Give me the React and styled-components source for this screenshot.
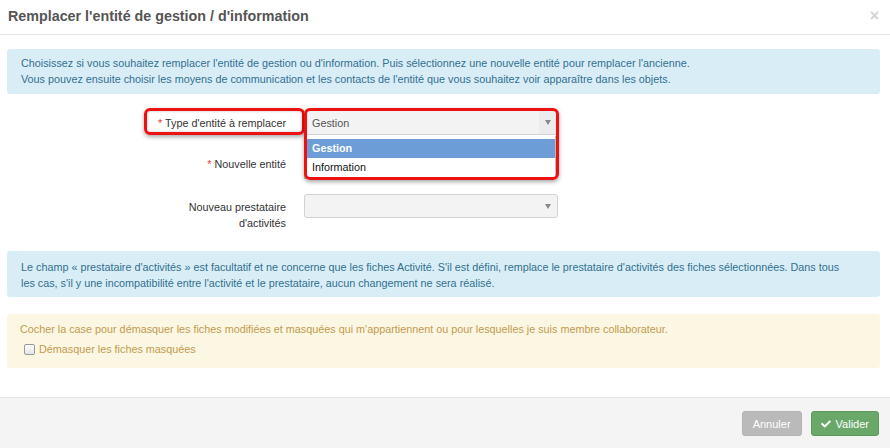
import React from 'react';
import styled, {createGlobalStyle} from 'styled-components';
import {FaCheck} from 'react-icons/fa';

const GlobalStyle = createGlobalStyle`
  html, body {
    margin: 0;
    padding: 0;
    background: #fff;
    font-family: "Liberation Sans", Arial, sans-serif;
    font-size: 10.8px;
    color: #333;
  }
`;

const Modal = styled.div`
  display: flex;
  flex-direction: column;
  height: 100vh;
  width: 100%;
`;

const Header = styled.div`
  display: flex;
  align-items: center;
  justify-content: space-between;
  height: 34px;
  padding: 0 11px 0 8px;
  border-bottom: 1px solid #e5e5e5;
`;

const Title = styled.h4`
  margin: 0;
  font-size: 14.3px;
  font-weight: bold;
  color: #555;
  line-height: 18px;
  padding-bottom: 3px;
`;

const Close = styled.span`
  font-size: 16px;
  font-weight: bold;
  color: #d4d4d4;
  line-height: 1;
  padding-bottom: 3px;
`;

const Body = styled.div`
  flex: 1;
  padding: 14px 10px 0 7px;
`;

const Alert = styled.div`
  border-radius: 3px;
  padding: ${props => props.pad || '7px 14px'};
  line-height: 16px;
  color: ${props => (props.warning ? '#c39a4f' : '#31708f')};
  background: ${props => (props.warning ? '#fcf7e3' : '#d9edf7')};
  margin-bottom: ${props => props.mb || 0}px;
`;

const Form = styled.div`
  display: grid;
  grid-template-columns: 279px 254px;
  column-gap: 18px;
  row-gap: 17px;
  margin: 16px 0 20px;
`;

const Label = styled.div`
  text-align: right;
  padding-top: ${props => props.pt || 5}px;
  line-height: 16px;
  color: #333;
`;

const Star = styled.span`
  color: #e33;
  margin-right: 3px;
`;

const Highlight = styled.span`
  position: relative;
  display: inline-block;
  &::after {
    content: '';
    position: absolute;
    top: -7px;
    bottom: -4px;
    left: -14px;
    right: -19px;
    border: 3px solid #ee1111;
    border-radius: 6px;
    box-shadow: 0 2px 4px rgba(0, 0, 0, 0.35), inset 0 0 3px rgba(0, 0, 0, 0.25);
    pointer-events: none;
  }
`;

const SelectWrap = styled.div`
  position: relative;
`;

const Select = styled.div`
  display: flex;
  align-items: center;
  height: ${props => props.h || 25}px;
  box-sizing: border-box;
  border: 1px solid #d2d2d2;
  border-radius: ${props => (props.open ? '3px 3px 0 0' : '3px')};
  background: #f3f3f3;
  color: #555;
  padding-left: 7px;
`;

const SelectValue = styled.span`
  flex: 1;
`;

const Arrow = styled.span`
  display: flex;
  align-items: center;
  justify-content: center;
  align-self: stretch;
  width: 18px;
  background: ${props => (props.shade ? '#ececec' : 'transparent')};
  &::before {
    content: '';
    border-left: 3.5px solid transparent;
    border-right: 3.5px solid transparent;
    border-top: 5px solid #888;
  }
`;

const Dropdown = styled.div`
  position: absolute;
  top: 26px;
  left: 0;
  right: 2px;
  z-index: 2;
  background: #fff;
  border: 1px solid #bbb;
  border-top: none;
  padding: 3px 0 1px;
`;

const Option = styled.div`
  height: 19px;
  line-height: 19px;
  padding-left: 7px;
  color: ${props => (props.active ? '#fff' : '#111')};
  font-weight: ${props => (props.active ? 'bold' : 'normal')};
  background: ${props => (props.active ? '#6d9dd7' : 'transparent')};
`;

const SelectFrame = styled.div`
  position: absolute;
  top: -2px;
  left: 0;
  width: 255px;
  height: 72px;
  box-sizing: border-box;
  border: 3px solid #ee1111;
  border-radius: 6px;
  box-shadow: 0 2px 4px rgba(0, 0, 0, 0.35);
  z-index: 3;
  pointer-events: none;
`;

const CheckRow = styled.label`
  display: flex;
  align-items: center;
  margin: 4px 0 0 4px;
  line-height: 16px;
`;

const CheckBox = styled.span`
  width: 9px;
  height: 9px;
  border: 1px solid #999;
  border-radius: 2px;
  background: linear-gradient(#fdfdfd, #e4e4e4);
  margin-right: 4px;
`;

const Footer = styled.div`
  display: flex;
  justify-content: flex-end;
  gap: 9px;
  height: 51px;
  padding: 13px 11px 0 0;
  box-sizing: border-box;
  border-top: 1px solid #e5e5e5;
  background: #f4f4f4;
`;

const Button = styled.button`
  display: flex;
  align-items: center;
  gap: 5px;
  height: 25px;
  padding: 0 ${props => (props.primary ? 9 : 10)}px;
  border-radius: 3px;
  border: 1px solid ${props => (props.primary ? '#5c9a5c' : '#b3b3b3')};
  background: ${props => (props.primary ? '#6aa86a' : '#bababa')};
  color: #fff;
  font-family: "Liberation Sans", Arial, sans-serif;
  font-size: 11px;
  cursor: pointer;
`;

// Modal de remplacement de l'entité
export default function App() {
    return (
        <Modal>
            <GlobalStyle/>
            <Header>
                <Title>Remplacer l'entité de gestion / d'information</Title>
                <Close>×</Close>
            </Header>
            <Body>
                <Alert pad="6px 14px 7px">
                    Choisissez si vous souhaitez remplacer l'entité de gestion ou d'information. Puis sélectionnez une nouvelle entité pour remplacer l'ancienne.
                    <br/>
                    Vous pouvez ensuite choisir les moyens de communication et les contacts de l'entité que vous souhaitez voir apparaître dans les objets.
                </Alert>
                <Form>
                    <Label>
                        <Highlight><Star>*</Star>Type d'entité à remplacer</Highlight>
                    </Label>
                    <SelectWrap>
                        <Select open>
                            <SelectValue>Gestion</SelectValue>
                            <Arrow shade/>
                        </Select>
                        <Dropdown>
                            <Option active>Gestion</Option>
                            <Option>Information</Option>
                        </Dropdown>
                        <SelectFrame/>
                    </SelectWrap>

                    <Label pt={4}><Star>*</Star>Nouvelle entité</Label>
                    <SelectWrap>
                        <Select>
                            <SelectValue/>
                            <Arrow/>
                        </Select>
                    </SelectWrap>

                    <Label>Nouveau prestataire<br/>d'activités</Label>
                    <SelectWrap>
                        <Select h={24}>
                            <SelectValue/>
                            <Arrow/>
                        </Select>
                    </SelectWrap>
                </Form>
                <Alert pad="8px 14px 6px" mb={17}>
                    Le champ « prestataire d'activités » est facultatif et ne concerne que les fiches Activité. S'il est défini, remplace le prestataire d'activités des fiches sélectionnées. Dans tous
                    <br/>
                    les cas, s'il y une incompatibilité entre l'activité et le prestataire, aucun changement ne sera réalisé.
                </Alert>
                <Alert warning pad="7px 13px 11px">
                    Cocher la case pour démasquer les fiches modifiées et masquées qui m'appartiennent ou pour lesquelles je suis membre collaborateur.
                    <CheckRow>
                        <CheckBox/>
                        Démasquer les fiches masquées
                    </CheckRow>
                </Alert>
            </Body>
            <Footer>
                <Button>Annuler</Button>
                <Button primary><FaCheck size={10}/>Valider</Button>
            </Footer>
        </Modal>
    );
}
